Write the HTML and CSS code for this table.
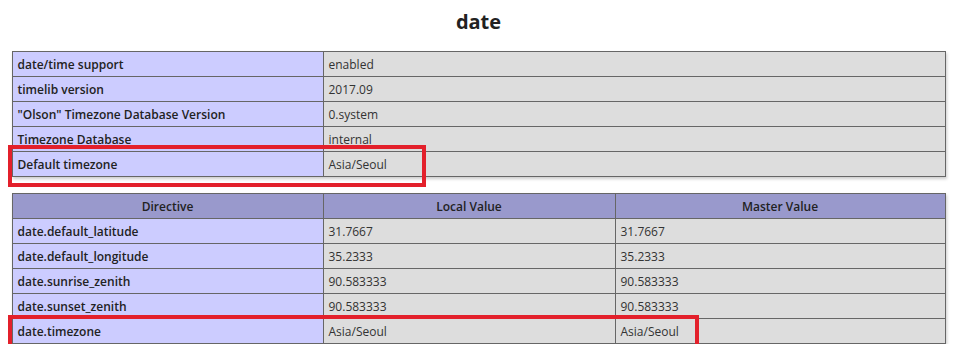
FILE: index.html
```html
<!DOCTYPE html>
<html>
<head>
<meta charset="utf-8">
<link rel="stylesheet" href="styles.css">
</head>
<body>
<div class="center">
  <h2>date</h2>
  <table class="t1">
    <colgroup><col class="c1"><col></colgroup>
    <tr><td class="e">date/time support</td><td class="v">enabled</td></tr>
    <tr><td class="e">timelib version</td><td class="v">2017.09</td></tr>
    <tr><td class="e">"Olson" Timezone Database Version</td><td class="v">0.system</td></tr>
    <tr><td class="e">Timezone Database</td><td class="v">internal</td></tr>
    <tr><td class="e">Default timezone</td><td class="v">Asia/Seoul</td></tr>
  </table>
  <table class="t2">
    <colgroup><col class="c1"><col class="c2"><col></colgroup>
    <tr class="h"><th>Directive</th><th>Local Value</th><th>Master Value</th></tr>
    <tr><td class="e">date.default_latitude</td><td class="v">31.7667</td><td class="v">31.7667</td></tr>
    <tr><td class="e">date.default_longitude</td><td class="v">35.2333</td><td class="v">35.2333</td></tr>
    <tr><td class="e">date.sunrise_zenith</td><td class="v">90.583333</td><td class="v">90.583333</td></tr>
    <tr><td class="e">date.sunset_zenith</td><td class="v">90.583333</td><td class="v">90.583333</td></tr>
    <tr><td class="e">date.timezone</td><td class="v">Asia/Seoul</td><td class="v">Asia/Seoul</td></tr>
  </table>
  <div class="mark mark1"></div>
  <div class="mark mark2"></div>
</div>
</body>
</html>
```
FILE: styles.css
```css
html, body {
  margin: 0;
  padding: 0;
  background: #fff;
}
body {
  font-family: "Open Sans", "Noto Sans", "Noto Sans CJK KR", sans-serif;
  color: #222;
}
.center {
  position: relative;
  width: 957px;
  padding-top: 10px;
}
h2 {
  margin: 0 0 17px;
  font-size: 20px;
  line-height: 24px;
  font-weight: bold;
  text-align: center;
  color: #222;
}
table {
  border-collapse: collapse;
  table-layout: fixed;
  width: 934px;
  margin: 0 auto;
  box-shadow: 1px 2px 3px #ccc;
}
.t1 {
  margin-bottom: 16px;
}
.c1 { width: 311px; }
.c2 { width: 292px; }
td, th {
  border: 1px solid #666;
  font-size: 12px;
  line-height: 16px;
  padding: 5px 5px 3px;
  text-align: left;
  white-space: nowrap;
  overflow: hidden;
}
.e {
  background: #ccf;
  font-weight: 600;
  color: #222;
}
.v {
  background: #ddd;
  font-weight: normal;
  color: #333;
}
.h th {
  background: #99c;
  font-weight: 600;
  text-align: center;
  color: #222;
}
.mark {
  position: absolute;
  border: 4px solid #e3202b;
  box-sizing: border-box;
}
.mark1 {
  left: 8px;
  top: 145px;
  width: 418px;
  height: 42px;
}
.mark2 {
  left: 8px;
  top: 315px;
  width: 691px;
  height: 37px;
}
```
